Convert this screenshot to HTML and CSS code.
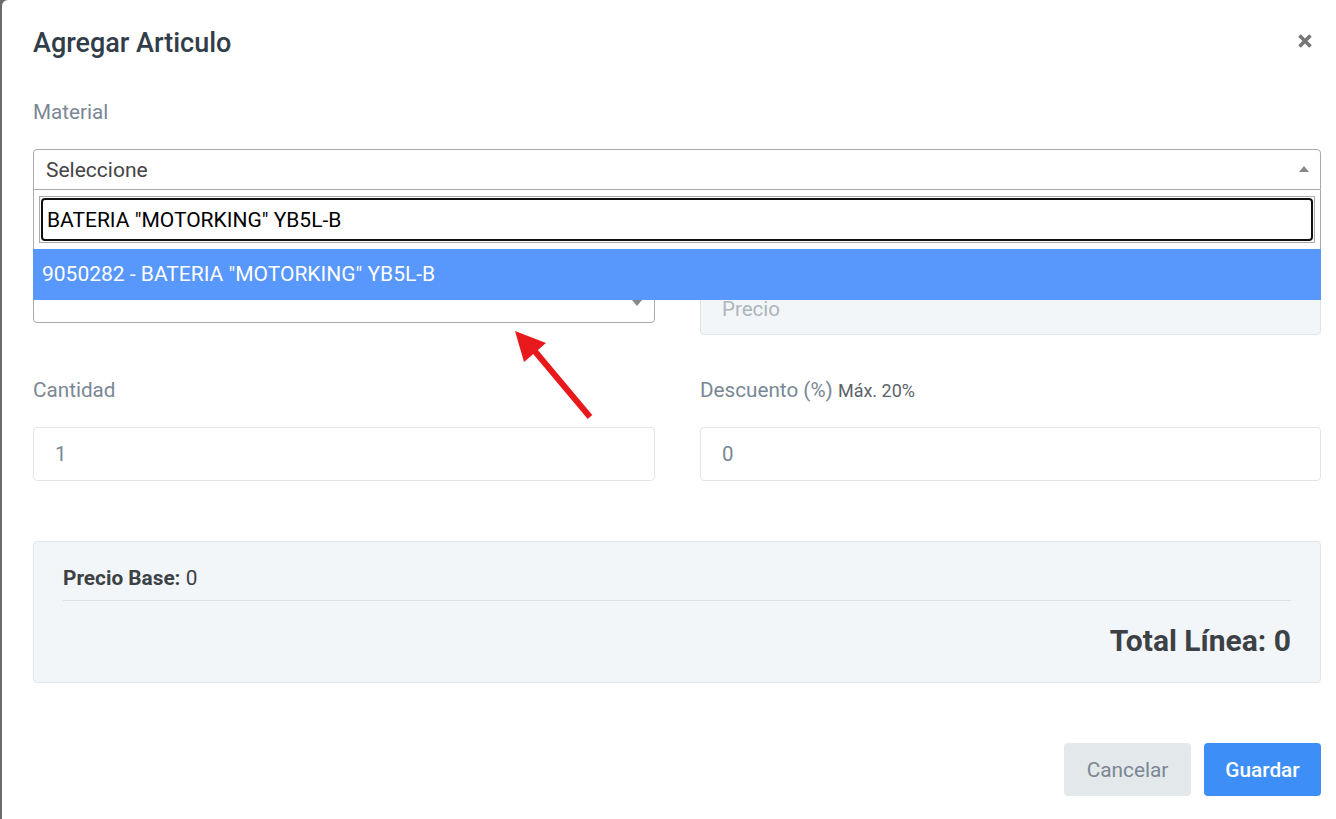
FILE: index.html
```html
<!DOCTYPE html>
<html lang="es">
<head>
<meta charset="utf-8">
<title>Agregar Articulo</title>
<link rel="stylesheet" href="styles.css">
</head>
<body>
<div class="backdrop">
  <div class="modal">
    <div class="modal-header">
      <h2 class="modal-title">Agregar Articulo</h2>
      <svg class="close" width="16" height="16" viewBox="0 0 16 16" aria-label="Cerrar">
        <path d="M2.5 2.5 L13.5 13.5 M13.5 2.5 L2.5 13.5" stroke="#767676" stroke-width="3.6" stroke-linecap="butt"/>
      </svg>
    </div>
    <div class="modal-body">
      <div class="group material">
        <label class="lbl">Material</label>
        <div class="select open">
          <span class="select-text">Seleccione</span>
          <span class="caret up"></span>
        </div>
        <div class="dropdown">
          <div class="search-wrap"><input class="search" type="text" value='BATERIA "MOTORKING" YB5L-B'></div>
          <div class="option">9050282 - BATERIA "MOTORKING" YB5L-B</div>
        </div>
      </div>
      <div class="row">
        <div class="group">
          <label class="lbl">Artículo</label>
          <div class="select"><span class="select-text"></span><span class="caret down"></span></div>
        </div>
        <div class="group">
          <label class="lbl">Precio</label>
          <input class="input disabled" type="text" placeholder="Precio" disabled>
        </div>
      </div>
      <div class="row last">
        <div class="group">
          <label class="lbl">Cantidad</label>
          <input class="input" type="text" value="1">
        </div>
        <div class="group">
          <label class="lbl">Descuento (%) <small class="hint">Máx. 20%</small></label>
          <input class="input" type="text" value="0">
        </div>
      </div>
      <div class="summary">
        <div class="base"><strong>Precio Base:</strong> 0</div>
        <div class="total">Total Línea: 0</div>
      </div>
      <div class="footer">
        <button class="btn cancel">Cancelar</button>
        <button class="btn save">Guardar</button>
      </div>
    </div>
    <svg class="arrow" width="90" height="100" viewBox="0 0 90 100">
      <line x1="20" y1="20" x2="77" y2="88" stroke="#e8191c" stroke-width="6"/>
      <polygon points="2,2 33,14 11,33" fill="#e8191c"/>
    </svg>
  </div>
</div>
</body>
</html>
```
FILE: styles.css
```css
* { box-sizing: border-box; }
html, body { margin: 0; padding: 0; height: 100%; overflow: hidden; }
body {
  font-family: Roboto, "Liberation Sans", Arial, sans-serif;
  background: #6b6b6b;
}
.backdrop { height: 100%; padding-left: 2px; }
.modal {
  position: relative;
  width: 1350px;
  height: 100%;
  background: #fff;
  border-radius: 6px 0 0 0;
  padding: 0 31px 0 31px;
}
.modal-header {
  display: flex;
  align-items: center;
  justify-content: space-between;
  padding-top: 25px;
}
.modal-title {
  margin: 0;
  font-size: 27px;
  line-height: 36px;
  font-weight: 500;
  color: #313d48;
}
.close {
  display: block;
  margin-right: 8px;
  margin-top: -4px;
}
.modal-body { padding-top: 36px; }
.group { display: flex; flex-direction: column; }
.material { position: relative; margin-bottom: 41px; }
.lbl {
  display: block;
  height: 30px;
  font-size: 20.7px;
  line-height: 30px;
  color: #7a8794;
  margin-bottom: 22px;
  white-space: nowrap;
}
.hint { font-size: 18px; line-height: 0; color: #5b6268; }
.row {
  display: grid;
  grid-template-columns: 622px 621px;
  column-gap: 45px;
  align-items: start;
  margin-bottom: 40px;
}
.row.last { margin-bottom: 60px; }
.select {
  position: relative;
  height: 41px;
  border: 1px solid #aaa;
  border-radius: 4px;
  display: flex;
  align-items: center;
  padding-left: 12px;
  font-size: 21px;
  color: #444;
}
.row .select { height: 40px; }
.select.open { border-bottom-left-radius: 0; border-bottom-right-radius: 0; }
.caret {
  position: absolute;
  right: 11px;
  width: 0; height: 0;
  border-left: 5px solid transparent;
  border-right: 5px solid transparent;
}
.caret.up { border-bottom: 6px solid #888; top: 16px; }
.caret.down { border-top: 6px solid #888; top: 16px; right: 12px; }
.dropdown {
  position: absolute;
  left: 0; right: 0;
  top: 93px;
  background: #fff;
  border: 1px solid #aaa;
  border-top: none;
  z-index: 5;
}
.search-wrap {
  margin: 6px 5px;
  border: 1px solid #aaa;
  padding: 1px;
}
.search {
  display: block;
  width: 100%;
  height: 43px;
  border: 2px solid #111;
  border-radius: 4px;
  font-family: Roboto, "Liberation Sans", Arial, sans-serif;
  font-size: 21px;
  color: #000;
  padding: 0 4px;
  outline: none;
}
.option {
  background: #5897fb;
  color: #fff;
  font-size: 21px;
  height: 51px;
  line-height: 51px;
  padding-left: 9px;
  margin: 0 -1px -1px -1px;
}
.input {
  display: block;
  width: 100%;
  height: 54px;
  border: 1px solid #e2e5e8;
  border-radius: 4px;
  background: #fff;
  font-family: Roboto, "Liberation Sans", Arial, sans-serif;
  font-size: 20.5px;
  color: #7a8794;
  padding: 0 21px;
  outline: none;
}
.input.disabled { background: #f3f6f9; height: 52px; }
.input::placeholder { color: #adb5bd; }
.summary {
  background: #f3f6f9;
  border: 1px solid #e2e5e8;
  border-radius: 4px;
  padding: 23px 29px 24px 29px;
  margin-bottom: 60px;
  color: #3c4146;
}
.base {
  font-size: 20.8px;
  line-height: 26px;
  padding-bottom: 9px;
  border-bottom: 1px solid #dde2e6;
}
.base strong { font-weight: 700; }
.total {
  text-align: right;
  font-size: 30px;
  font-weight: 700;
  line-height: 35px;
  margin-top: 22px;
}
.footer {
  display: flex;
  justify-content: flex-end;
  gap: 13px;
}
.btn {
  height: 53px;
  border: none;
  border-radius: 4px;
  font-family: Roboto, "Liberation Sans", Arial, sans-serif;
  font-size: 20.8px;
  padding: 0;
}
.cancel { background: #e3e8eb; color: #7a8794; width: 127px; }
.save { background: #3e8ef7; color: #fff; font-weight: 500; width: 117px; }
.arrow {
  position: absolute;
  left: 511px;
  top: 329px;
  overflow: visible;
  z-index: 6;
}
```
